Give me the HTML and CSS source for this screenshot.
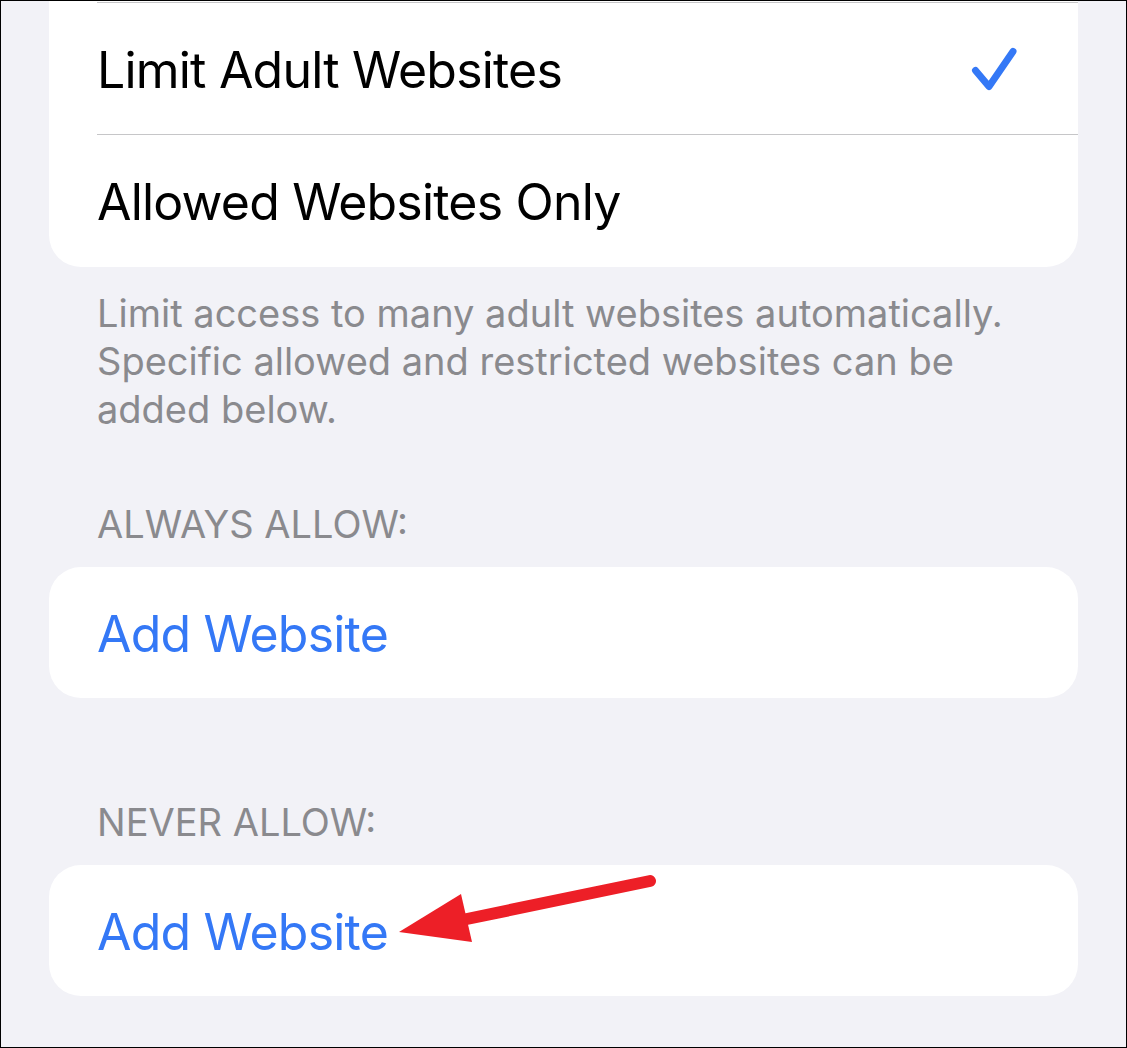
FILE: index.html
```html
<!DOCTYPE html>
<html lang="en">
<head>
<meta charset="utf-8">
<title>Content Restrictions</title>
<link rel="stylesheet" href="styles.css">
</head>
<body>
<div class="frame">
  <div class="card card-first">
    <div class="row row-sep">
      <span class="label">Limit Adult Websites</span>
      <svg class="check" width="50" height="50" viewBox="0 0 50 50" aria-hidden="true">
        <polyline points="5.5,25.5 19,41.5 43,6.5" fill="none" stroke="#3478f6" stroke-width="7" stroke-linecap="round" stroke-linejoin="round"/>
      </svg>
    </div>
    <div class="row row-sep">
      <span class="label">Allowed Websites Only</span>
    </div>
  </div>

  <p class="footer">Limit access to many adult websites automatically. Specific allowed and restricted websites can be added below.</p>

  <h2 class="header header-always">ALWAYS ALLOW:</h2>
  <div class="card">
    <div class="row row-single">
      <span class="label link">Add Website</span>
    </div>
  </div>

  <h2 class="header header-never">NEVER ALLOW:</h2>
  <div class="card">
    <div class="row row-single">
      <span class="label link">Add Website</span>
    </div>
  </div>

  <svg class="annotation" width="1127" height="1048" viewBox="0 0 1127 1048" aria-hidden="true">
    <line x1="650" y1="881" x2="462" y2="920" stroke="#ed1f27" stroke-width="12" stroke-linecap="round"/>
    <polygon points="399,932 461,894 472,942" fill="#ed1f27"/>
  </svg>
</div>
</body>
</html>
```
FILE: styles.css
```css
html, body {
  margin: 0;
  padding: 0;
}

body {
  font-family: Inter, "Noto Sans", "Liberation Sans", sans-serif;
  background: #f2f2f7;
}

.frame {
  position: relative;
  box-sizing: border-box;
  width: 1127px;
  height: 1048px;
  border: 1px solid #000;
  background: #f2f2f7;
  overflow: hidden;
  padding: 0 48px;
}

.card {
  background: #fff;
  border-radius: 32px;
}

.card-first {
  border-radius: 0 0 32px 32px;
  padding: 1px 0;
}

.row {
  box-sizing: border-box;
  display: flex;
  align-items: center;
  justify-content: space-between;
  padding: 4px 58px 0 48px;
}

.row-sep {
  height: 132px;
  position: relative;
}

.row-sep::before {
  content: "";
  position: absolute;
  top: 0;
  left: 48px;
  right: 0;
  height: 1px;
  background: #c6c6c8;
}

.row-single {
  height: 131px;
  padding-top: 2px;
}

.label {
  font-size: 50px;
  line-height: 60px;
  letter-spacing: -0.8px;
  color: #000;
}

.link {
  color: #3478f6;
}

.check {
  display: block;
}

.footer {
  margin: 22px 0 0;
  padding: 0 40px 0 48px;
  font-size: 38px;
  line-height: 48px;
  color: #8a8a8e;
}

.header {
  margin: 0;
  padding: 0 0 0 48px;
  font-size: 38px;
  line-height: 48px;
  font-weight: 400;
  color: #8a8a8e;
}

.header-always {
  margin-top: 67px;
  margin-bottom: 19px;
}

.header-never {
  margin-top: 100px;
  margin-bottom: 19px;
}

.annotation {
  position: absolute;
  left: -1px;
  top: -1px;
  pointer-events: none;
}
```
